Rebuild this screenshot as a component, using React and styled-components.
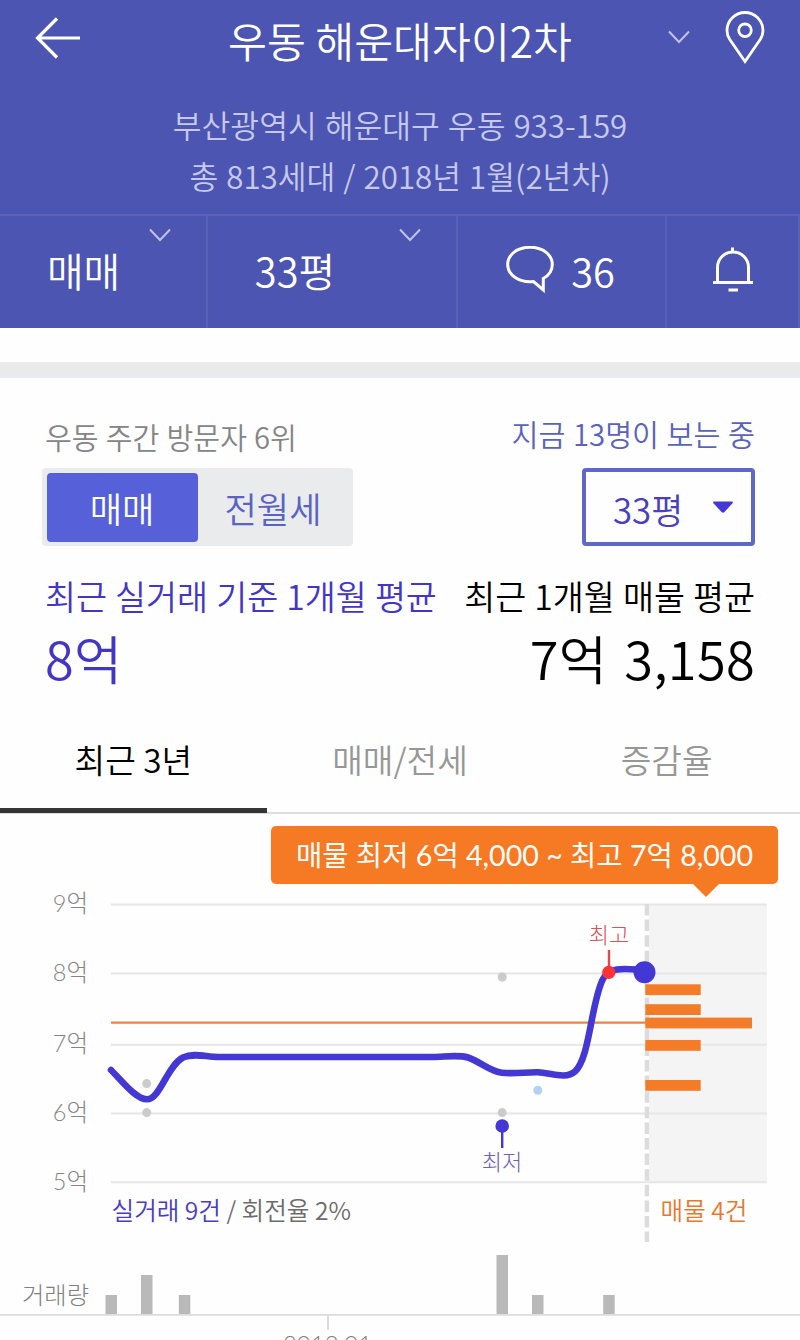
import React from "react";
import styled, { createGlobalStyle } from "styled-components";

const gridLines = [
  { label: "9억", y: 904.5, text: 912 },
  { label: "8억", y: 973.5, text: 981 },
  { label: "7억", y: 1044.7, text: 1052 },
  { label: "6억", y: 1113.5, text: 1121 },
  { label: "5억", y: 1182.3, text: 1190 },
];

const offers = [
  { y: 984.3, width: 55.4 },
  { y: 1004.2, width: 55.4 },
  { y: 1017.6, width: 106.7 },
  { y: 1040, width: 55.4 },
  { y: 1080, width: 55.4 },
];

const volumes = [
  { x: 105.5, height: 20 },
  { x: 141, height: 40 },
  { x: 178.8, height: 20 },
  { x: 496.5, height: 60 },
  { x: 532, height: 20 },
  { x: 603.2, height: 20 },
];

const dots = [
  { x: 146.7, y: 1083.6 },
  { x: 146.7, y: 1112.6 },
  { x: 502.2, y: 977 },
  { x: 502.2, y: 1112.6 },
];

function Chevron() {
  return (
    <svg width="22" height="14" viewBox="0 0 22 14" fill="none">
      <path d="M1 1.5 L11 12 L21 1.5" stroke="#bfc3ea" strokeWidth="2" />
    </svg>
  );
}

function PriceChart() {
  return (
    <Chart viewBox="0 814 800 526">
      <rect x="649" y="904" width="118" height="279" fill="#f4f4f4" />
      {gridLines.map((line) => (
        <g key={line.label}>
          <path d={`M111 ${line.y}H767`} stroke="#e6e6e6" strokeWidth="2" />
          <AxisText x="88" y={line.text}>
            {line.label}
          </AxisText>
        </g>
      ))}
      <path
        d="M646.9 904V1242"
        stroke="#dcdcdc"
        strokeWidth="4.4"
        strokeDasharray="11.5 4.1"
      />
      <path d="M111 1022.6H646" stroke="#ea8540" strokeWidth="2.4" />
      {offers.map((offer) => (
        <rect
          key={offer.y}
          x="645.3"
          y={offer.y}
          width={offer.width}
          height="10.8"
          fill="#f47b27"
        />
      ))}
      {dots.map((dot) => (
        <circle key={`${dot.x}-${dot.y}`} cx={dot.x} cy={dot.y} r="4.5" fill="#cbcbcb" />
      ))}
      <circle cx="537.8" cy="1090.3" r="4.5" fill="#b4d2ef" />
      <path
        d="M111 1070 C122 1081 136 1099.3 147 1099.3 C160 1099.3 167 1066 183 1057.5 C194 1052.5 206 1057 218 1057 H433 C444 1057 458 1054.5 468 1057.5 C480 1061.5 490 1071.5 502 1072.8 C515 1074 526 1072 538 1072.2 C551 1073 566 1079.5 575 1071.5 C590 1058 591 1002 603 979 C610 966 626 969 644 970"
        stroke="#4338d4"
        strokeWidth="6.6"
        strokeLinecap="round"
        fill="none"
      />
      <circle cx="644.5" cy="972.3" r="11" fill="#4338d4" />
      <path d="M609 950V970" stroke="#dd4a50" strokeWidth="2.4" />
      <circle cx="608.8" cy="972.4" r="6.6" fill="#fb3236" />
      <MarkText x="609" y="943" fill="#d4555a">
        최고
      </MarkText>
      <path d="M502.2 1126V1148" stroke="#4338d4" strokeWidth="2.4" />
      <circle cx="502.2" cy="1126" r="6.8" fill="#4338d4" />
      <MarkText x="502" y="1170" fill="#6a5fc4">
        최저
      </MarkText>
      <SummaryText x="111.5" y="1219.5">
        <tspan fill="#4a3cc4">실거래 9건</tspan> / 회전율 2%
      </SummaryText>
      <SummaryText x="660.5" y="1219.5" fill="#e57a2c">
        매물 4건
      </SummaryText>
      <VolumeText x="22" y="1303.5">
        거래량
      </VolumeText>
      {volumes.map((bar) => (
        <rect
          key={bar.x}
          x={bar.x}
          y={1315 - bar.height}
          width="11.5"
          height={bar.height}
          fill="#b9b9b9"
        />
      ))}
      <path d="M0 1314.8H800" stroke="#dcdcdc" strokeWidth="1.8" />
      <path d="M328 1315V1330" stroke="#dcdcdc" strokeWidth="2" />
      <DateText x="327.5" y="1353">
        2018.01
      </DateText>
    </Chart>
  );
}

function App() {
  return (
    <Page>
      <GlobalStyle />
      <Header>
        <TitleRow>
          <BackButton>
            <svg width="46" height="42" viewBox="0 0 46 42" fill="none">
              <path
                d="M22 1.5 L2.5 21 L22 40.5 M2.5 21 H45"
                stroke="#fff"
                strokeWidth="3.2"
              />
            </svg>
          </BackButton>
          <Title>우동 해운대자이2차</Title>
          <TitleActions>
            <Chevron />
            <svg width="40" height="55" viewBox="0 0 40 55" fill="none">
              <path
                d="M20 51.5 L4.8 29.5 C2.5 26 2 23.5 2 20.5 A18 18 0 0 1 38 20.5 C38 23.5 37.5 26 35.2 29.5 Z"
                stroke="#fff"
                strokeWidth="2.8"
              />
              <circle cx="20" cy="20.3" r="6.3" stroke="#fff" strokeWidth="2.8" />
            </svg>
          </TitleActions>
        </TitleRow>
        <Address>
          <p>부산광역시 해운대구 우동 933-159</p>
          <p>총 813세대 / 2018년 1월(2년차)</p>
        </Address>
        <Menu>
          <MenuItem $space="39px">
            매매
            <MenuChevron>
              <Chevron />
            </MenuChevron>
          </MenuItem>
          <MenuItem $space="74px">
            33평
            <MenuChevron>
              <Chevron />
            </MenuChevron>
          </MenuItem>
          <MenuItem>
            <svg width="50" height="48" viewBox="0 0 50 48" fill="none">
              <path
                d="M27.5 35.5 C13 37 1.7 29 1.7 18.5 C1.7 8.5 11.5 1.2 24 1.2 C36.5 1.2 46.3 8.5 46.3 18.5 C46.3 24.5 43 29.3 37.3 32.5 V44 Z"
                stroke="#fff"
                strokeWidth="3"
              />
            </svg>
            36
          </MenuItem>
          <MenuItem $space="0">
            <svg width="42" height="46" viewBox="0 0 42 46" fill="none">
              <path
                d="M1 35.5 H41 M5.5 35 V20.5 A15.5 15.5 0 0 1 36.5 20.5 V35 M20.5 5 V0.5 M16.5 43 H26"
                stroke="#fff"
                strokeWidth="3"
              />
            </svg>
          </MenuItem>
        </Menu>
      </Header>
      <Divider />
      <Summary>
        <Between>
          <Rank>우동 주간 방문자 6위</Rank>
          <Viewers>지금 13명이 보는 중</Viewers>
        </Between>
        <Between>
          <Segment>
            <SegmentButton $active>매매</SegmentButton>
            <SegmentButton>전월세</SegmentButton>
          </Segment>
          <Select>
            <span>33평</span>
            <svg width="22" height="13" viewBox="0 0 22 13">
              <path
                d="M2 0.5 H20 Q21.5 1 20.5 2.2 L12.5 11 Q11 12.5 9.5 11 L1.5 2.2 Q0.5 1 2 0.5Z"
                fill="#4436d8"
              />
            </svg>
          </Select>
        </Between>
        <Prices>
          <Price $color="#4436c4">
            <PriceLabel>최근 실거래 기준 1개월 평균</PriceLabel>
            <PriceValue>8억</PriceValue>
          </Price>
          <Price $color="#000" $align="right">
            <PriceLabel>최근 1개월 매물 평균</PriceLabel>
            <PriceValue>7억 3,158</PriceValue>
          </Price>
        </Prices>
      </Summary>
      <Tabs>
        <Tab $active>최근 3년</Tab>
        <Tab>매매/전세</Tab>
        <Tab>증감율</Tab>
      </Tabs>
      <ChartArea>
        <PriceChart />
        <Tooltip>매물 최저 6억 4,000 ~ 최고 7억 8,000</Tooltip>
      </ChartArea>
    </Page>
  );
}

const GlobalStyle = createGlobalStyle`
  * {
    box-sizing: border-box;
  }
  body {
    margin: 0;
    overflow: hidden;
  }
  p, h1 {
    margin: 0;
    font-weight: inherit;
  }
  svg {
    display: block;
    flex: none;
  }
  button {
    font: inherit;
    border: none;
    background: none;
    padding: 0;
  }
`;
const Page = styled.div`
  width: 800px;
  height: 1340px;
  overflow: hidden;
  background: #fefefe;
  font-family: "Noto Sans CJK KR", sans-serif;
  font-weight: 350;
  white-space: nowrap;
`;
const Header = styled.header`
  height: 328px;
  background: #4c55b1;
  color: #fff;
`;
const TitleRow = styled.div`
  display: grid;
  grid-template-columns: 145px 1fr 145px;
  height: 79px;
`;
const BackButton = styled.button`
  padding: 17px 0 0 35px;
  align-self: start;
`;
const Title = styled.h1`
  font-size: 42.3px;
  line-height: 79px;
  text-align: center;
`;
const TitleActions = styled.div`
  display: flex;
  align-items: flex-start;
  padding-top: 10px;
  gap: 35px;
  margin-left: 13px;

  svg:first-child {
    margin-top: 20px;
  }
`;
const Address = styled.div`
  height: 135px;
  padding-top: 21px;
  color: #c6c9ec;
  font-size: 31.3px;
  line-height: 50.5px;
  text-align: center;
  word-spacing: 1px;
`;
const Menu = styled.nav`
  display: grid;
  grid-template-columns: 208px 250px 209px 133px;
  height: 114px;
  border-top: 2px solid #5961b8;
`;
const MenuItem = styled.div`
  position: relative;
  display: flex;
  align-items: center;
  justify-content: center;
  gap: 15px;
  padding-right: ${(props) => props.$space || "2px"};
  padding-bottom: 4px;
  border-right: 2px solid #575fb7;
  font-size: 39.8px;
  line-height: 108px;
`;
const MenuChevron = styled.span`
  position: absolute;
  top: 12px;
  right: 35px;
`;
const Divider = styled.div`
  height: 50px;
  border-top: 34px solid #fefefe;
  background: #e8eaec;
`;
const Summary = styled.section`
  height: 330px;
  padding: 32px 45px 0 42px;
`;
const Between = styled.div`
  display: flex;
  justify-content: space-between;
`;
const Rank = styled.p`
  padding: 4px 0 0 3px;
  color: #858585;
  font-size: 29.2px;
  line-height: 44px;
  word-spacing: 0.5px;
`;
const Viewers = styled.p`
  height: 58px;
  padding-top: 1px;
  color: #5b62bb;
  font-size: 29.3px;
  line-height: 44px;
  word-spacing: 1px;
`;
const Segment = styled.div`
  display: grid;
  grid-template-columns: 151px 151px;
  width: 311px;
  height: 78px;
  padding: 4.5px;
  border-radius: 4px;
  background: #e9ebed;
`;
const SegmentButton = styled.button`
  border-radius: 4px;
  background: ${(props) => (props.$active ? "#5661d9" : "transparent")};
  color: ${(props) => (props.$active ? "#fff" : "#5a63c4")};
  font-size: 35.2px;
  line-height: 69px;
`;
const Select = styled.div`
  display: flex;
  align-items: center;
  width: 173px;
  height: 78px;
  padding-left: 27px;
  gap: 29px;
  border: 4px solid #5f68c6;
  border-radius: 4px;
  color: #4a3fc0;
  font-size: 34.8px;
  line-height: 70px;

  span {
    padding-top: 4px;
  }
`;
const Prices = styled.div`
  display: flex;
  justify-content: space-between;
  padding: 26px 0 0 3px;
`;
const Price = styled.div`
  color: ${(props) => props.$color};
  text-align: ${(props) => props.$align || "left"};
`;
const PriceLabel = styled.p`
  font-size: 33.7px;
  line-height: 48px;
  word-spacing: 0.6px;
`;
const PriceValue = styled.p`
  font-size: 52.4px;
  line-height: 74px;
  letter-spacing: 0.3px;
  word-spacing: 5px;
`;
const Tabs = styled.div`
  display: grid;
  grid-template-columns: repeat(3, 1fr);
  height: 106px;
  border-bottom: 2px solid #dcdcdc;
`;
const Tab = styled.div`
  height: 105px;
  border-bottom: 5px solid ${(props) => (props.$active ? "#343434" : "transparent")};
  color: ${(props) => (props.$active ? "#000" : "#979797")};
  font-size: 33.3px;
  line-height: 102px;
  text-align: center;
`;
const ChartArea = styled.section`
  position: relative;
`;
const Chart = styled.svg`
  width: 800px;
  height: 526px;
`;
const Tooltip = styled.div`
  position: absolute;
  top: 12px;
  left: 271px;
  width: 507px;
  height: 58px;
  border-radius: 5px;
  background: #f57a23;
  color: #fff;
  font-family: Lato, "Noto Sans CJK KR", sans-serif;
  font-size: 28.6px;
  font-weight: 400;
  line-height: 58px;
  text-align: center;

  &::after {
    content: "";
    position: absolute;
    top: 57px;
    left: 421px;
    border: 14px solid transparent;
    border-top-color: #f57a23;
    border-bottom: none;
  }
`;
const AxisText = styled.text`
  fill: #858585;
  font-family: Lato, "Noto Sans CJK KR", sans-serif;
  font-size: 23.5px;
  font-weight: 300;
  text-anchor: end;
`;
const MarkText = styled.text`
  font-size: 22px;
  font-weight: 300;
  text-anchor: middle;
`;
const SummaryText = styled.text`
  fill: ${(props) => props.fill || "#6c6c6c"};
  font-size: 24.6px;
`;
const VolumeText = styled.text`
  fill: #808080;
  font-size: 24.3px;
  font-weight: 300;
`;
const DateText = styled.text`
  fill: #808080;
  font-family: Lato, "Noto Sans CJK KR", sans-serif;
  font-size: 24px;
  font-weight: 300;
  text-anchor: middle;
`;

export default App;
